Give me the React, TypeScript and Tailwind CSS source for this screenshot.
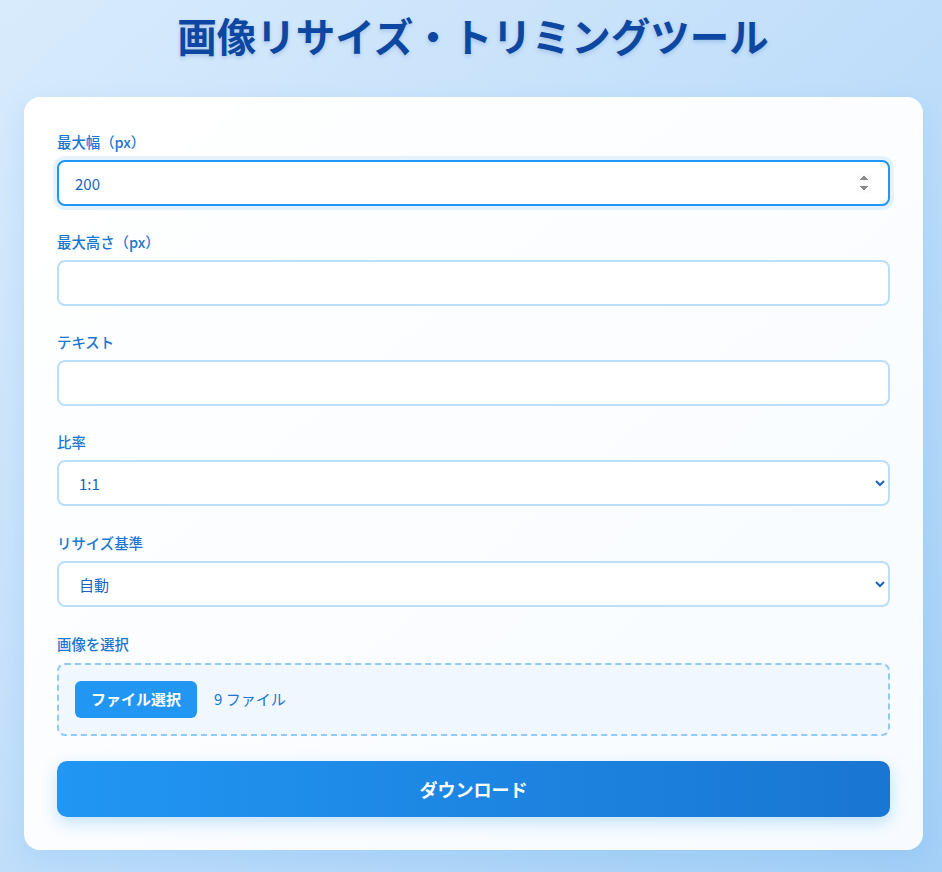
import { useState } from "react"

const FONT = { fontFamily: '"Noto Sans CJK JP", "Noto Sans", sans-serif' }

const inputCls =
  "w-full h-[46px] rounded-[8px] border-2 border-[#bbdefb] bg-white px-[16px] text-[15px] text-[#1565c0] outline-none focus:border-[#2196f3] focus:ring-4 focus:ring-[#e3f2fd]"

function Field({ label, gap = "mb-[24px]", children }: { label: string; gap?: string; children: React.ReactNode }) {
  return (
    <div className={gap}>
      <label className="block text-[14.4px] leading-[24px] font-medium text-[#1976d2] mb-[6px]">{label}</label>
      {children}
    </div>
  )
}

export default function App() {
  const [width, setWidth] = useState("200")
  const [height, setHeight] = useState("")
  const [text, setText] = useState("")
  const [ratio, setRatio] = useState("1:1")
  const [basis, setBasis] = useState("auto")

  return (
    <div
      style={FONT}
      className="min-h-screen bg-gradient-to-br from-[#d8ebfc] via-[#c0defa] to-[#a4cff6] pt-[11px] pb-[23px]"
    >
      <h1 className="text-center pl-[4px] text-[39.5px] leading-[48px] font-bold text-[#0d47a1] mb-[38px] [text-shadow:0_2px_4px_rgba(13,71,161,0.2)]">
        画像リサイズ・トリミングツール
      </h1>

      <div className="ml-[24px] w-[899px] rounded-[16px] bg-gradient-to-br from-white to-[#f7fbff] p-[33px] shadow-[0_8px_24px_rgba(33,150,243,0.12)]">
        <Field label="最大幅（px）">
          <input
            type="number"
            autoFocus
            value={width}
            onChange={(e) => setWidth(e.target.value)}
            className={inputCls}
          />
        </Field>
        <Field label="最大高さ（px）">
          <input type="number" value={height} onChange={(e) => setHeight(e.target.value)} className={inputCls} />
        </Field>
        <Field label="テキスト">
          <input type="text" value={text} onChange={(e) => setText(e.target.value)} className={inputCls} />
        </Field>
        <Field label="比率" gap="mb-[25px]">
          <select value={ratio} onChange={(e) => setRatio(e.target.value)} className={inputCls}>
            <option value="1:1">1:1</option>
            <option value="4:3">4:3</option>
            <option value="16:9">16:9</option>
            <option value="free">自由</option>
          </select>
        </Field>
        <Field label="リサイズ基準" gap="mb-[25px]">
          <select value={basis} onChange={(e) => setBasis(e.target.value)} className={inputCls}>
            <option value="auto">自動</option>
            <option value="width">幅</option>
            <option value="height">高さ</option>
          </select>
        </Field>

        <div className="mb-[25px]">
          <label className="block text-[14.4px] leading-[24px] font-medium text-[#1976d2] mb-[7px]">画像を選択</label>
          <div className="flex items-center gap-[17px] rounded-[8px] border-2 border-dashed border-[#90caf9] bg-[#f0f7fe] p-[16px]">
            <button className="h-[37px] rounded-[6px] bg-[#2196f3] px-[16px] text-[15px] font-bold text-white">
              ファイル選択
            </button>
            <span className="text-[15px] text-[#1976d2]">9 ファイル</span>
          </div>
        </div>

        <button className="w-full h-[56px] rounded-[10px] bg-gradient-to-r from-[#2196f3] to-[#1976d2] text-[18px] font-bold text-white shadow-[0_6px_16px_rgba(33,150,243,0.25)]">
          ダウンロード
        </button>
      </div>
    </div>
  )
}
